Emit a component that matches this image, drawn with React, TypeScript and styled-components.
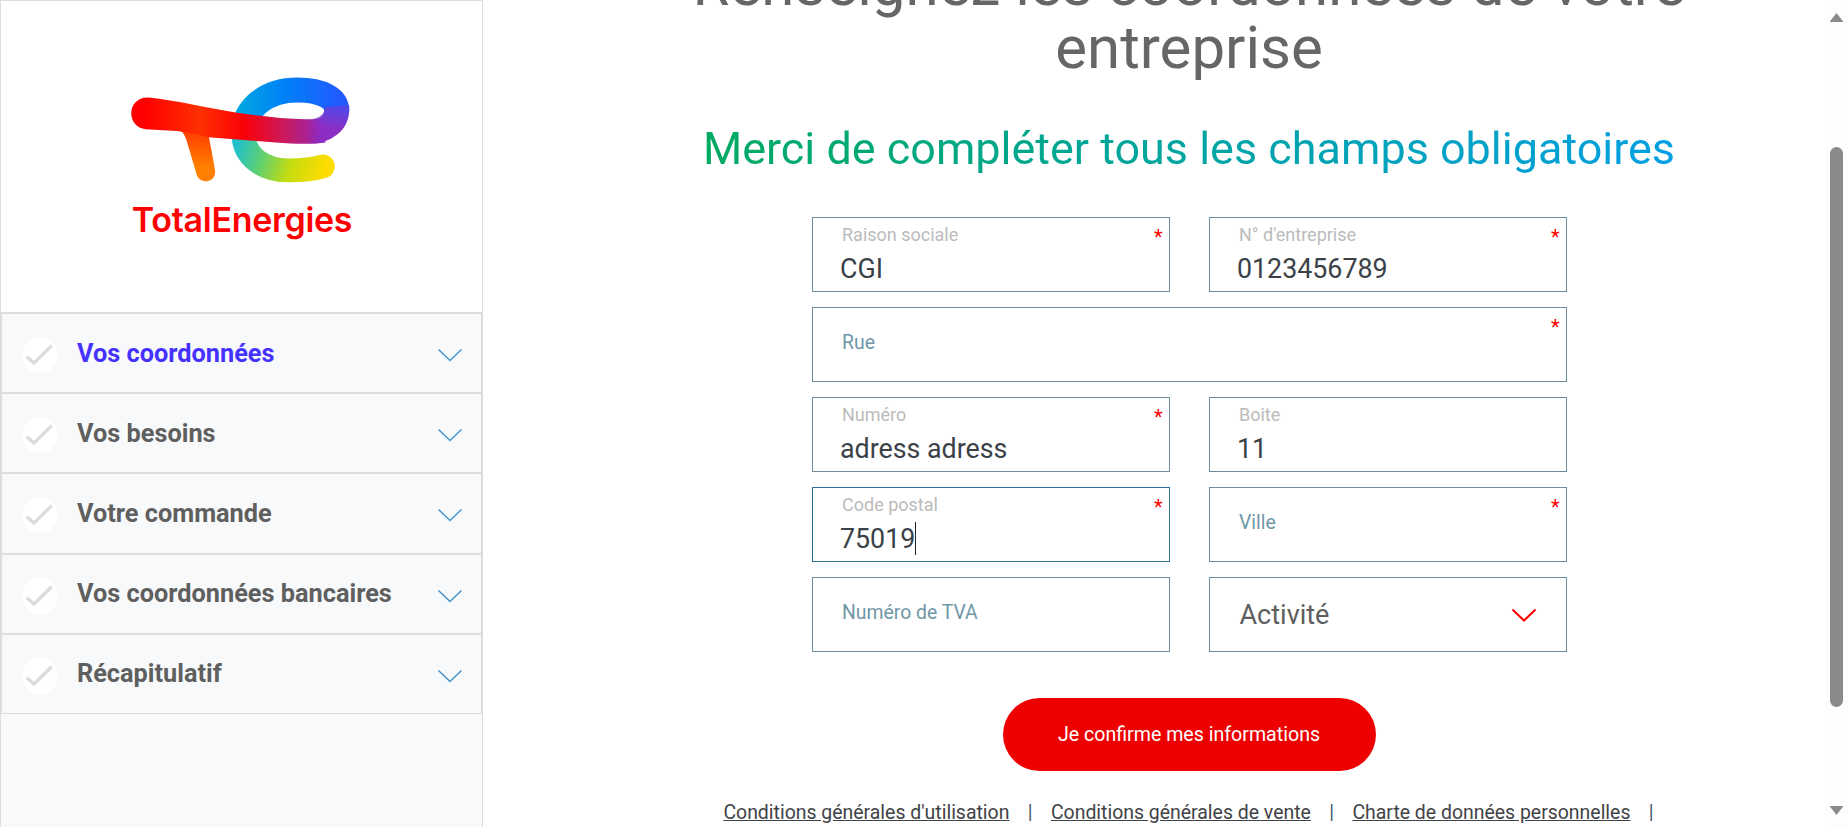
import React from "react";
import styled, { createGlobalStyle } from "styled-components";

const steps = [
  { label: "Vos coordonnées", active: true },
  { label: "Vos besoins" },
  { label: "Votre commande" },
  { label: "Vos coordonnées bancaires" },
  { label: "Récapitulatif" },
];

function Logo() {
  return (
    <LogoMark viewBox="0 0 810 400">
      <defs>
        <linearGradient id="arcTop" gradientUnits="userSpaceOnUse" x1="380" y1="0" x2="700" y2="0">
          <stop offset="0" stopColor="#00a8e0" />
          <stop offset="0.45" stopColor="#0082f8" />
          <stop offset="1" stopColor="#2258ff" />
        </linearGradient>
        <linearGradient id="arcBottom" gradientUnits="userSpaceOnUse" x1="385" y1="250" x2="650" y2="330">
          <stop offset="0" stopColor="#22c0cc" />
          <stop offset="0.3" stopColor="#60d070" />
          <stop offset="0.62" stopColor="#c4dc10" />
          <stop offset="1" stopColor="#ffdc00" />
        </linearGradient>
        <linearGradient id="arcRight" gradientUnits="userSpaceOnUse" x1="700" y1="95" x2="682" y2="205">
          <stop offset="0" stopColor="#2a5aff" />
          <stop offset="1" stopColor="#8c2ec4" />
        </linearGradient>
        <linearGradient id="band" gradientUnits="userSpaceOnUse" x1="110" y1="0" x2="650" y2="0">
          <stop offset="0" stopColor="#ff0000" />
          <stop offset="0.3" stopColor="#ff3000" />
          <stop offset="0.55" stopColor="#fa0008" />
          <stop offset="0.78" stopColor="#c81a60" />
          <stop offset="1" stopColor="#9028c0" />
        </linearGradient>
        <linearGradient id="stem" gradientUnits="userSpaceOnUse" x1="280" y1="190" x2="280" y2="320">
          <stop offset="0" stopColor="#ff3000" />
          <stop offset="1" stopColor="#ff8000" />
        </linearGradient>
        <linearGradient id="fade" gradientUnits="userSpaceOnUse" x1="600" y1="0" x2="648" y2="0">
          <stop offset="0" stopColor="#000000" />
          <stop offset="1" stopColor="#ffffff" />
        </linearGradient>
        <mask id="fadeMask" maskUnits="userSpaceOnUse" x="0" y="0" width="810" height="400">
          <rect width="810" height="400" fill="url(#fade)" />
        </mask>
      </defs>
      <path d="M403 215C403 290 465 329 540 329C590 329 620 324 642 317" fill="none" stroke="url(#arcBottom)" strokeWidth="72" strokeLinecap="round" />
      <path d="M403 225C403 135 480 87 565 87C640 87 684 112 684 150" fill="none" stroke="url(#arcTop)" strokeWidth="75" />
      <path d="M190 190C225 205 232 235 240 265L262 340C270 372 322 370 318 328L298 220Z" fill="url(#stem)" />
      <path d="M118 110C200 118 300 143 380 155C450 165 530 176 600 175C625 175 645 170 645 160L650 245C620 250 560 250 500 245L298 229C270 222 225 212 190 210L110 205C50 200 50 108 118 110Z" fill="url(#band)" />
      <path d="M684 135C688 185 650 213 590 213" fill="none" stroke="url(#arcRight)" strokeWidth="75" mask="url(#fadeMask)" />
    </LogoMark>
  );
}

function Check() {
  return (
    <CheckCircle>
      <svg width="36" height="36" viewBox="0 0 36 36">
        <path d="M4.7 19.7L12 26L29.7 8.7" fill="none" stroke="#dcdcdc" strokeWidth="3.4" />
      </svg>
    </CheckCircle>
  );
}

function Chevron({ color, weight = 1.6 }: { color: string; weight?: number }) {
  return (
    <svg width="26" height="14" viewBox="0 0 26 14">
      <path d="M1.5 1.5L13 12.5L24.5 1.5" fill="none" stroke={color} strokeWidth={weight} />
    </svg>
  );
}

function Field({
  label,
  value,
  required,
  focused,
  wide,
}: {
  label: string;
  value?: string;
  required?: boolean;
  focused?: boolean;
  wide?: boolean;
}) {
  return (
    <FieldBox $focused={focused} $wide={wide}>
      {value ? (
        <>
          <FloatLabel>{label}</FloatLabel>
          <Value>
            {value}
            {focused && <Caret />}
          </Value>
        </>
      ) : (
        <Placeholder>{label}</Placeholder>
      )}
      {required && <Required>*</Required>}
    </FieldBox>
  );
}

export default function App() {
  return (
    <Page>
      <GlobalStyle />
      <Sidebar>
        <LogoArea>
          <Logo />
          <LogoText>TotalEnergies</LogoText>
        </LogoArea>
        {steps.map((step) => (
          <Step key={step.label}>
            <Check />
            <StepLabel $active={step.active}>{step.label}</StepLabel>
            <Chevron color="#4a96cc" />
          </Step>
        ))}
      </Sidebar>
      <Main>
        <Title>Renseignez les coordonnées de votre entreprise</Title>
        <Subtitle>Merci de compléter tous les champs obligatoires</Subtitle>
        <Form>
          <Field label="Raison sociale" value="CGI" required />
          <Field label="N° d'entreprise" value="0123456789" required />
          <Field label="Rue" required wide />
          <Field label="Numéro" value="adress adress" required />
          <Field label="Boite" value="11" />
          <Field label="Code postal" value="75019" required focused />
          <Field label="Ville" required />
          <Field label="Numéro de TVA" />
          <SelectBox>
            Activité
            <Chevron color="#ff0000" weight={2} />
          </SelectBox>
        </Form>
        <Submit>Je confirme mes informations</Submit>
        <Footer>
          <FooterLink>Conditions générales d'utilisation</FooterLink>
          <Separator>|</Separator>
          <FooterLink>Conditions générales de vente</FooterLink>
          <Separator>|</Separator>
          <FooterLink>Charte de données personnelles</FooterLink>
          <Separator>|</Separator>
        </Footer>
      </Main>
      <Scrollbar>
        <ArrowUp />
        <Thumb />
        <ArrowDown />
      </Scrollbar>
    </Page>
  );
}

const GlobalStyle = createGlobalStyle`
  html, body {
    margin: 0;
    height: 100%;
    overflow: hidden;
    background: #ffffff;
  }
  * {
    box-sizing: border-box;
  }
`;

const Page = styled("div")`
  display: flex;
  height: 827px;
  overflow: hidden;
  font-family: Roboto, "Liberation Sans", sans-serif;
`;

const Sidebar = styled("aside")`
  flex: 0 0 483px;
  height: 827px;
  background: #f7f9fb;
  border-right: 1px solid #dddddd;
  border-left: 1px solid #dddddd;
`;

const LogoArea = styled("div")`
  height: 312px;
  background: #ffffff;
  border-top: 1px solid #dddddd;
  padding-top: 60px;
  display: flex;
  flex-direction: column;
  align-items: center;
`;

const LogoMark = styled("svg")`
  width: 270px;
  height: 133px;
  margin-left: 4px;
  flex: none;
`;

const LogoText = styled("div")`
  font-family: Inter, sans-serif;
  font-weight: 600;
  font-size: 34px;
  line-height: 38px;
  letter-spacing: -0.3px;
  color: #ff0000;
  margin-top: 7px;
  margin-left: 1px;
`;

const Step = styled("div")`
  height: 80.2px;
  display: flex;
  align-items: center;
  padding: 4px 18px 0 20px;
  border-top: 2px solid #dddddd;
  border-left: 1px solid #dddddd;
  border-right: 1px solid #dddddd;

  &:nth-of-type(6) {
    height: 81.2px;
    border-bottom: 1px solid #dddddd;
  }
`;

const CheckCircle = styled("div")`
  width: 36px;
  height: 36px;
  border-radius: 50%;
  background: #ffffff;
  flex: none;
  display: flex;
`;

const StepLabel = styled("div")<{ $active?: boolean }>`
  flex: 1;
  margin-left: 19px;
  margin-top: -4px;
  font-size: 25.3px;
  font-weight: 700;
  color: ${(p) => (p.$active ? "#4632ff" : "#5f5f5f")};
`;

const Main = styled("main")`
  flex: 1;
  min-width: 0;
  padding-left: 70px;
  display: flex;
  flex-direction: column;
  align-items: center;
`;

const Title = styled("h1")`
  margin: -47px 0 0;
  max-width: 1060px;
  font-size: 60px;
  line-height: 63px;
  font-weight: 400;
  text-align: center;
  color: #666666;
`;

const Subtitle = styled("div")`
  margin-top: 40px;
  font-size: 44.95px;
  line-height: 60px;
  white-space: nowrap;
  background: linear-gradient(90deg, #00aa61, #009fe3);
  -webkit-background-clip: text;
  background-clip: text;
  color: transparent;
`;

const Form = styled("div")`
  margin-top: 38px;
  width: 755px;
  display: grid;
  grid-template-columns: 358px 358px;
  column-gap: 39px;
  row-gap: 15px;
`;

const FieldBox = styled("div")<{ $focused?: boolean; $wide?: boolean }>`
  position: relative;
  height: 75px;
  padding: 6px 29px 0;
  border: 1px solid ${(p) => (p.$focused ? "#2f6f9f" : "#6d8d9c")};
  grid-column: ${(p) => (p.$wide ? "1 / 3" : "auto")};
`;

const FloatLabel = styled("div")`
  margin-left: 0.5px;
  font-size: 18px;
  line-height: 21px;
  color: #bbbbbb;
`;

const Value = styled("div")`
  display: flex;
  margin-top: 6px;
  margin-left: -1.5px;
  font-size: 26.8px;
  line-height: 36px;
  color: #3a4248;
`;

const Caret = styled("span")`
  width: 1px;
  height: 33px;
  margin-top: 1px;
  background: #222222;
`;

const Placeholder = styled("div")`
  margin-top: 18px;
  margin-left: 0.5px;
  font-size: 19.4px;
  line-height: 21px;
  color: #6f97a8;
`;

const Required = styled("span")`
  position: absolute;
  top: 9px;
  right: 6px;
  font-size: 20px;
  line-height: 20px;
  color: #ff0000;
`;

const SelectBox = styled("div")`
  height: 75px;
  padding: 0 29px 0 30px;
  display: flex;
  align-items: center;
  justify-content: space-between;
  border: 1px solid #6d8d9c;
  font-size: 27px;
  color: #5e5e5e;
`;

const Submit = styled("button")`
  margin-top: 46px;
  width: 373px;
  height: 73px;
  flex: none;
  border: none;
  border-radius: 37px;
  background: #ee0000;
  color: #ffffff;
  font-family: inherit;
  font-size: 19.6px;
  font-weight: 400;
  cursor: pointer;
`;

const Footer = styled("div")`
  margin-top: 30px;
  margin-left: -1px;
  display: flex;
  gap: 18.4px;
  font-size: 19.45px;
  line-height: 24px;
  white-space: nowrap;
`;

const FooterLink = styled("a")`
  color: #3f4346;
  text-decoration: underline;
  cursor: pointer;
`;

const Separator = styled("span")`
  color: #40566a;
`;

const Scrollbar = styled("div")`
  flex: 0 0 23px;
  height: 827px;
  background: #fdfdfd;
  display: flex;
  flex-direction: column;
  align-items: center;
  padding-top: 13px;
`;

const ArrowUp = styled("div")`
  width: 14px;
  height: 9px;
  background: #8a8a8a;
  clip-path: polygon(50% 0, 100% 100%, 0 100%);
`;

const ArrowDown = styled("div")`
  width: 14px;
  height: 9px;
  margin-top: 99px;
  background: #8a8a8a;
  clip-path: polygon(0 0, 100% 0, 50% 100%);
`;

const Thumb = styled("div")`
  width: 13px;
  height: 560px;
  margin-top: 125px;
  border-radius: 7px;
  background: #8a8a8a;
`;
